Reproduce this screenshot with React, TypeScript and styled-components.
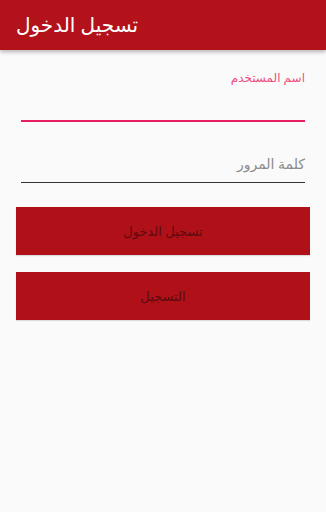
import React from "react";
import styled, { createGlobalStyle } from "styled-components";

const Global = createGlobalStyle`
  html, body { margin: 0; padding: 0; background: #fafafa; }
  body { font-family: "Noto Sans", "DejaVu Sans", sans-serif; }
`;

const Page = styled.div`
  width: 326px;
  height: 512px;
  background: #fafafa;
  display: flex;
  flex-direction: column;
`;

const AppBar = styled.header`
  height: 50px;
  background: #b3121b;
  box-shadow: 0 2px 4px rgba(0, 0, 0, 0.28);
  display: flex;
  align-items: center;
  padding: 0 0 2px 16px;
  box-sizing: border-box;
`;

const Title = styled.h1`
  margin: 0;
  font-size: 20px;
  font-weight: 400;
  color: #ffffff;
  direction: rtl;
`;

const Form = styled.div`
  display: flex;
  flex-direction: column;
  padding: 20px 16px 0 16px;
  direction: rtl;
`;

const Field = styled.div<{ $h: number; $mt: number; $gap: number }>`
  height: ${(p) => p.$h}px;
  margin: ${(p) => p.$mt}px 5px 0 5px;
  display: flex;
  flex-direction: column;
  justify-content: ${(p) => (p.$gap ? "flex-end" : "space-between")};
  gap: ${(p) => p.$gap}px;
`;

const Label = styled.div<{ $color: string; $size: number }>`
  color: ${(p) => p.$color};
  font-size: ${(p) => p.$size}px;
  line-height: 16px;
`;

const Line = styled.div<{ $color: string; $w: number }>`
  height: ${(p) => p.$w}px;
  background: ${(p) => p.$color};
`;

const Button = styled.button<{ $mt: number }>`
  margin-top: ${(p) => p.$mt}px;
  height: 48px;
  border: none;
  background: #b01119;
  color: #5c0a0e;
  font-family: inherit;
  font-size: 13px;
  direction: rtl;
  padding: 0;
  box-shadow: 0 1px 1px rgba(0, 0, 0, 0.12);
`;

export default function App() {
  return (
    <Page>
      <Global />
      <AppBar>
        <Title>تسجيل الدخول</Title>
      </AppBar>
      <Form>
        <Field $h={52} $mt={0} $gap={0}>
          <Label $color="#ef4f7f" $size={12}>اسم المستخدم</Label>
          <Line $color="#e91e63" $w={2} />
        </Field>
        <Field $h={45} $mt={16} $gap={10}>
          <Label $color="#8c8c8c" $size={14}>كلمة المرور</Label>
          <Line $color="#333333" $w={1} />
        </Field>
        <Button $mt={24}>تسجيل الدخول</Button>
        <Button $mt={17}>التسجيل</Button>
      </Form>
    </Page>
  );
}
